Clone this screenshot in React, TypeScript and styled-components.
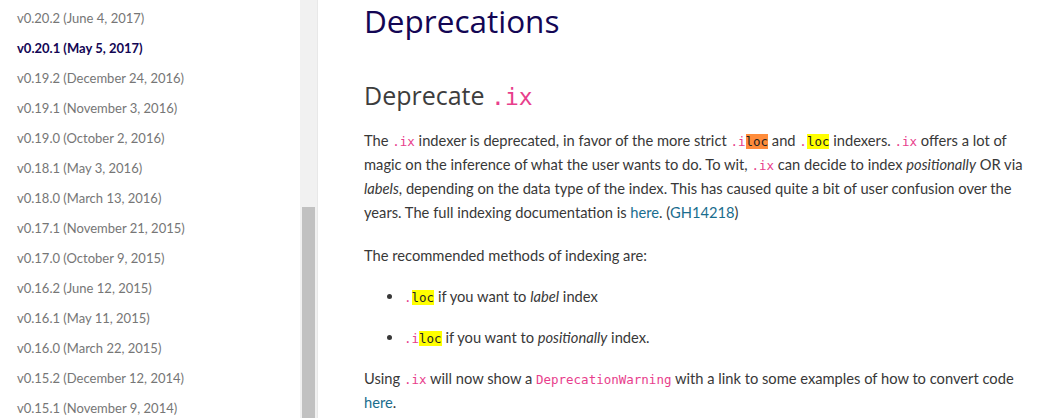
import styled, { createGlobalStyle } from 'styled-components'

const GlobalStyle = createGlobalStyle`
  html, body {
    margin: 0;
    padding: 0;
    height: 418px;
    overflow: hidden;
    background: #ffffff;
  }
`

const VERSIONS = [
  'v0.20.2 (June 4, 2017)',
  'v0.20.1 (May 5, 2017)',
  'v0.19.2 (December 24, 2016)',
  'v0.19.1 (November 3, 2016)',
  'v0.19.0 (October 2, 2016)',
  'v0.18.1 (May 3, 2016)',
  'v0.18.0 (March 13, 2016)',
  'v0.17.1 (November 21, 2015)',
  'v0.17.0 (October 9, 2015)',
  'v0.16.2 (June 12, 2015)',
  'v0.16.1 (May 11, 2015)',
  'v0.16.0 (March 22, 2015)',
  'v0.15.2 (December 12, 2014)',
  'v0.15.1 (November 9, 2014)',
]

const Page = styled.div`
  display: flex;
  height: 418px;
  overflow: hidden;
`

const Sidebar = styled.nav`
  display: flex;
  width: 318px;
  flex-shrink: 0;
  border-right: 1px solid #e8e8e8;
  box-sizing: border-box;
`

const VersionList = styled.ul`
  list-style: none;
  margin: 0;
  padding: 3px 0 0 17px;
  flex: 1;
`

const VersionItem = styled.li<{ active?: boolean }>`
  height: 30px;
  line-height: 30px;
  font-family: Lato, 'Liberation Sans', sans-serif;
  font-size: 13px;
  white-space: nowrap;
  color: ${({ active }) => (active ? '#130654' : '#767676')};
  font-weight: ${({ active }) => (active ? 700 : 400)};
`

const ScrollTrack = styled.div`
  width: 17px;
  background: #f1f1f1;
  display: flex;
  flex-direction: column;
  padding: 207px 2px 0;
  box-sizing: border-box;
`

const ScrollThumb = styled.div`
  flex: 1;
  background: #c1c1c1;
`

const Main = styled.main`
  flex: 1;
  padding: 0 20px 0 46px;
  font-family: Lato, 'Liberation Sans', sans-serif;
  font-size: 14.7px;
  line-height: 24px;
  color: #383838;
`

const Title = styled.h1`
  margin: 0;
  padding-top: 1px;
  font-family: 'Open Sans', 'Noto Sans', sans-serif;
  font-weight: 400;
  font-size: 31.5px;
  line-height: 40px;
  color: #130654;
`

const Subtitle = styled.h2`
  margin: 37px 0 16px;
  font-family: 'Open Sans', 'Noto Sans', sans-serif;
  font-weight: 400;
  font-size: 25px;
  line-height: 34px;
  color: #3d3d3d;
`

const Code = styled.code<{ large?: boolean }>`
  font-family: 'DejaVu Sans Mono', 'Liberation Mono', monospace;
  font-size: ${({ large }) => (large ? '23px' : '12.5px')};
  line-height: 1;
  color: #e83e8c;
`

const Mark = styled.span<{ tone: 'yellow' | 'orange' }>`
  color: #222222;
  background: ${({ tone }) => (tone === 'yellow' ? '#ffff00' : '#ff8c3a')};
`

const Para = styled.p`
  margin: 0 0 19px;
`

const Bullets = styled.ul`
  margin: -2px 0 17px;
  padding-left: 40px;
`

const Bullet = styled.li`
  margin-bottom: 17px;
`

const Link = styled.a`
  color: #1a6d8e;
  text-decoration: none;
`

export default function App() {
  return (
    <>
      <GlobalStyle />
      <Page>
        <Sidebar>
          <VersionList>
            {VERSIONS.map((v, i) => (
              <VersionItem key={v} active={i === 1}>
                {v}
              </VersionItem>
            ))}
          </VersionList>
          <ScrollTrack>
            <ScrollThumb />
          </ScrollTrack>
        </Sidebar>
        <Main>
          <Title>Deprecations</Title>
          <Subtitle>
            Deprecate <Code large>.ix</Code>
          </Subtitle>
          <Para>
            The <Code>.ix</Code> indexer is deprecated, in favor of the more strict{' '}
            <Code>
              .i<Mark tone="orange">loc</Mark>
            </Code>{' '}
            and{' '}
            <Code>
              .<Mark tone="yellow">loc</Mark>
            </Code>{' '}
            indexers. <Code>.ix</Code> offers a lot of magic on the inference of what the user wants to do. To
            wit, <Code>.ix</Code> can decide to index <em>positionally</em> OR via <em>labels</em>, depending on
            the data type of the index. This has caused quite a bit of user confusion over the years. The full
            indexing documentation is <Link href="#">here</Link>. (<Link href="#">GH14218</Link>)
          </Para>
          <Para>The recommended methods of indexing are:</Para>
          <Bullets>
            <Bullet>
              <Code>
                .<Mark tone="yellow">loc</Mark>
              </Code>{' '}
              if you want to <em>label</em> index
            </Bullet>
            <Bullet>
              <Code>
                .i<Mark tone="yellow">loc</Mark>
              </Code>{' '}
              if you want to <em>positionally</em> index.
            </Bullet>
          </Bullets>
          <Para>
            Using <Code>.ix</Code> will now show a <Code>DeprecationWarning</Code> with a link to some examples of
            how to convert code <Link href="#">here</Link>.
          </Para>
        </Main>
      </Page>
    </>
  )
}
